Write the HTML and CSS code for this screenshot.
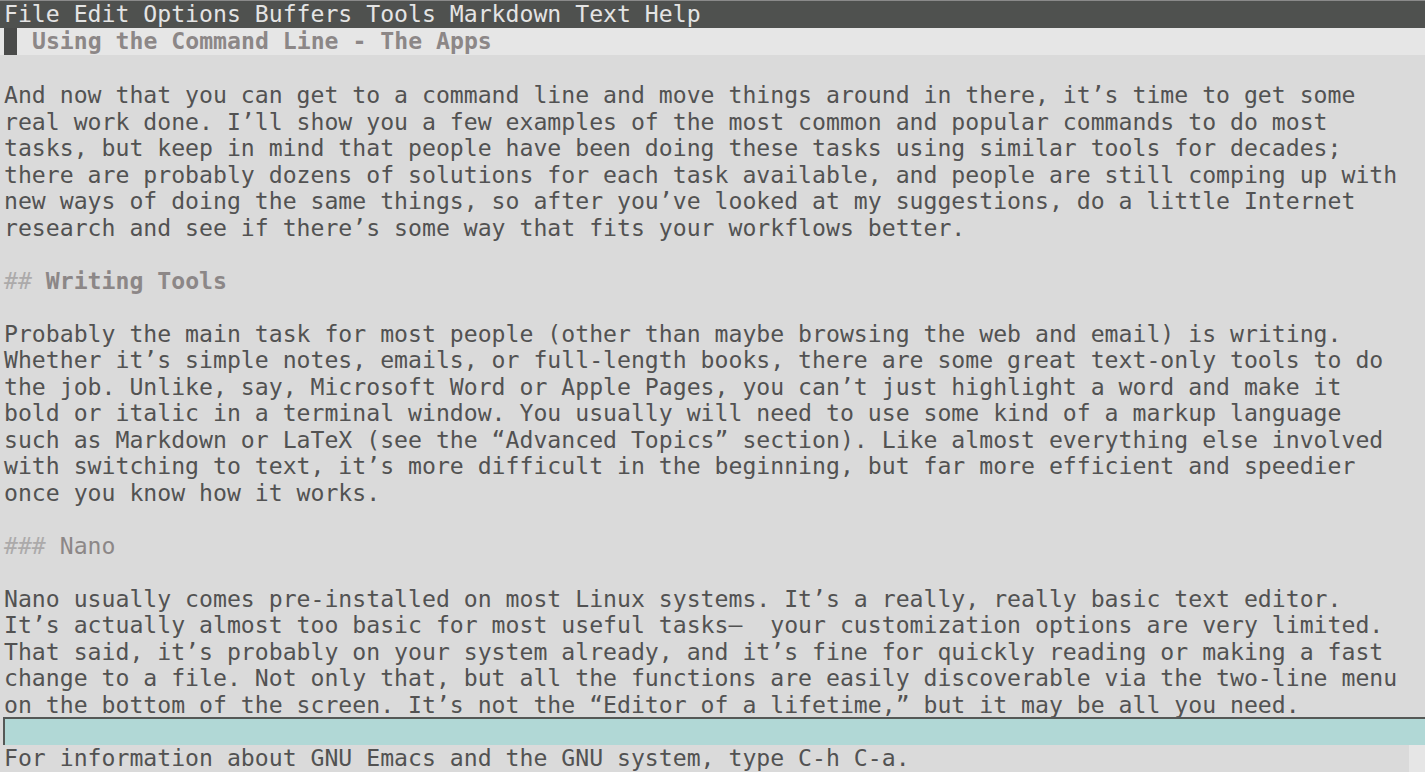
FILE: index.html
```html
<!DOCTYPE html>
<html lang="en">
<head>
<meta charset="utf-8">
<title>Emacs - Using the Command Line</title>
<link rel="stylesheet" href="styles.css">
</head>
<body>
<div class="frame">
  <div class="menubar"><span class="menuitems">File Edit Options Buffers Tools Markdown Text Help</span></div>
  <div class="headerline"><span class="cursor"></span><span class="title">Using the Command Line - The Apps</span></div>
  <div class="buffer">
    <div class="ln"> </div>
    <div class="ln">And now that you can get to a command line and move things around in there, it’s time to get some</div>
    <div class="ln">real work done. I’ll show you a few examples of the most common and popular commands to do most</div>
    <div class="ln">tasks, but keep in mind that people have been doing these tasks using similar tools for decades;</div>
    <div class="ln">there are probably dozens of solutions for each task available, and people are still comping up with</div>
    <div class="ln">new ways of doing the same things, so after you’ve looked at my suggestions, do a little Internet</div>
    <div class="ln">research and see if there’s some way that fits your workflows better.</div>
    <div class="ln"> </div>
    <div class="ln"><span class="mark">##</span> <span class="h2">Writing Tools</span></div>
    <div class="ln"> </div>
    <div class="ln">Probably the main task for most people (other than maybe browsing the web and email) is writing.</div>
    <div class="ln">Whether it’s simple notes, emails, or full-length books, there are some great text-only tools to do</div>
    <div class="ln">the job. Unlike, say, Microsoft Word or Apple Pages, you can’t just highlight a word and make it</div>
    <div class="ln">bold or italic in a terminal window. You usually will need to use some kind of a markup language</div>
    <div class="ln">such as Markdown or LaTeX (see the “Advanced Topics” section). Like almost everything else involved</div>
    <div class="ln">with switching to text, it’s more difficult in the beginning, but far more efficient and speedier</div>
    <div class="ln">once you know how it works.</div>
    <div class="ln"> </div>
    <div class="ln"><span class="mark">###</span> <span class="h3">Nano</span></div>
    <div class="ln"> </div>
    <div class="ln">Nano usually comes pre-installed on most Linux systems. It’s a really, really basic text editor.</div>
    <div class="ln">It’s actually almost too basic for most useful tasks—  your customization options are very limited.</div>
    <div class="ln">That said, it’s probably on your system already, and it’s fine for quickly reading or making a fast</div>
    <div class="ln">change to a file. Not only that, but all the functions are easily discoverable via the two-line menu</div>
    <div class="ln">on the bottom of the screen. It’s not the “Editor of a lifetime,” but it may be all you need.</div>
  </div>
  <div class="modeline"></div>
  <div class="echo"><span class="echotext">For information about GNU Emacs and the GNU system, type C-h C-a.</span><span class="echofringe"></span></div>
</div>
</body>
</html>
```

FILE: styles.css
```css
html, body {
  margin: 0;
  padding: 0;
  background: #dadada;
}

.frame {
  width: 1425px;
  height: 772px;
  overflow: hidden;
  display: flex;
  flex-direction: column;
  font-family: "DejaVu Sans Mono", "Liberation Mono", monospace;
  font-size: 23.15px;
  color: #525252;
  background: #dadada;
}

.menubar {
  height: 28px;
  flex: 0 0 28px;
  background: #4f514f;
  border-top: 1px solid #8a8a8a;
  box-sizing: border-box;
  color: #e4e4e4;
  line-height: 27px;
  padding-left: 4px;
  white-space: pre;
}

.headerline {
  height: 26.5px;
  flex: 0 0 26.5px;
  display: flex;
  align-items: stretch;
  background: #e6e6e6;
  padding-left: 4px;
  line-height: 27.5px;
  white-space: pre;
}

.cursor {
  width: 13px;
  background: #4a4b4a;
  flex: 0 0 13px;
}

.title {
  padding-left: 15px;
  font-weight: bold;
  color: #8c8787;
}

.buffer {
  flex: 0 0 auto;
  padding-left: 4px;
}

.ln {
  height: 26.5px;
  line-height: 28.5px;
  white-space: pre;
}

.mark {
  color: #acaaaa;
}

.h2 {
  font-weight: bold;
  color: #8c8787;
}

.h3 {
  color: #8c8787;
}

.modeline {
  height: 28px;
  flex: 0 0 28px;
  box-sizing: border-box;
  margin-left: 3px;
  background: #b1d8d6;
  border-top: 2px solid #555856;
  border-left: 2px solid #555856;
}

.echo {
  flex: 1 1 auto;
  display: flex;
  line-height: 27px;
  white-space: pre;
}

.echotext {
  flex: 1 1 auto;
  padding-left: 4px;
}

.echofringe {
  width: 16px;
  flex: 0 0 16px;
  background: #e6e6e6;
}
```
